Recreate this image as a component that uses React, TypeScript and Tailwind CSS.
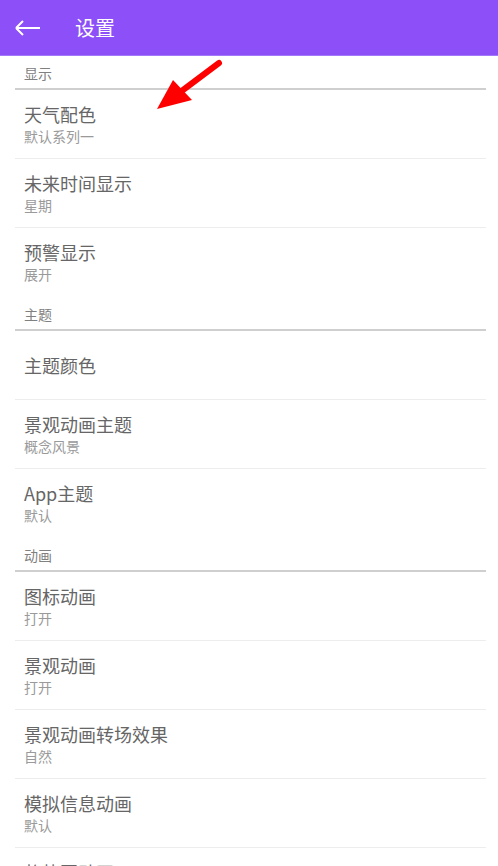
import React from "react";

type Item = { t: string; s?: string; last?: boolean };
type Section = { h: string; items: Item[] };

const sections: Section[] = [
  {
    h: "显示",
    items: [
      { t: "天气配色", s: "默认系列一" },
      { t: "未来时间显示", s: "星期" },
      { t: "预警显示", s: "展开", last: true },
    ],
  },
  {
    h: "主题",
    items: [
      { t: "主题颜色" },
      { t: "景观动画主题", s: "概念风景" },
      { t: "App主题", s: "默认", last: true },
    ],
  },
  {
    h: "动画",
    items: [
      { t: "图标动画", s: "打开" },
      { t: "景观动画", s: "打开" },
      { t: "景观动画转场效果", s: "自然" },
      { t: "模拟信息动画", s: "默认" },
      { t: "趋势图动画", s: "打开" },
    ],
  },
];

const font = { fontFamily: '"Noto Sans CJK SC", "Noto Sans", sans-serif' };

export default function App() {
  return (
    <div className="relative w-[498px] h-[866px] overflow-hidden bg-white" style={font}>
      <div className="h-[56px] bg-[#8c4ff8] border-b border-[#a27af9] flex items-center">
        <svg width="26" height="16" viewBox="0 0 26 16" className="ml-[15px]">
          <path d="M1 8 H25 M1 8 L8 1 M1 8 L8 15" stroke="white" strokeWidth="2" fill="none" />
        </svg>
        <span className="ml-[34px] text-[20px] leading-[28px] text-white">设置</span>
      </div>
      <div className="ml-[15px] mr-[12px] -mt-px">
        {sections.map((sec) => (
          <div key={sec.h}>
            <div className="pt-[8px] pb-[5px] pl-[9px] border-b-2 border-[#cfcfcf] text-[14px] leading-[20px] text-[#808080]">
              {sec.h}
            </div>
            {sec.items.map((it) => (
              <div
                key={it.t}
                className={
                  "pl-[9px] " +
                  (it.last ? "" : "border-b border-[#ededed] ") +
                  (it.s ? "pt-[12px] pb-[12px]" : "h-[69px] flex items-center")
                }
              >
                <div>
                  <div className="text-[18px] leading-[24px] text-[#666666]">{it.t}</div>
                  {it.s && <div className="text-[14px] leading-[20px] text-[#9a9a9a]">{it.s}</div>}
                </div>
              </div>
            ))}
          </div>
        ))}
      </div>
      <svg className="absolute left-0 top-0" width="498" height="200" viewBox="0 0 498 200">
        <line x1="219" y1="63" x2="183" y2="90" stroke="#ff0000" strokeWidth="6" strokeLinecap="round" />
        <polygon points="173,80 192,100 157,109" fill="#ff0000" />
      </svg>
    </div>
  );
}
